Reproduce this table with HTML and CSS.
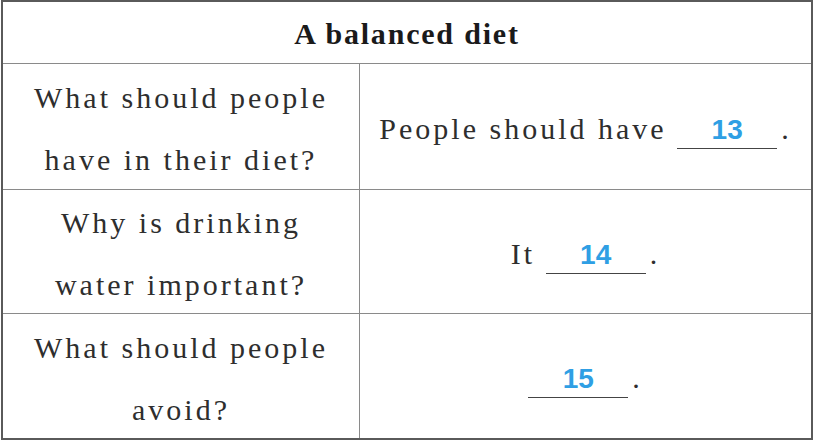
FILE: index.html
```html
<!DOCTYPE html>
<html>
<head>
<meta charset="utf-8">
<link rel="stylesheet" href="styles.css">
</head>
<body>
<div class="sheet">
  <div class="title">A balanced diet</div>
  <div class="q"><p class="text">What should people<br>have in their diet?</p></div>
  <div class="a"><p class="text">People should have <span class="blank">13</span>.</p></div>
  <div class="q"><p class="text">Why is drinking<br>water important?</p></div>
  <div class="a"><p class="text">It <span class="blank">14</span>.</p></div>
  <div class="q last"><p class="text">What should people<br>avoid?</p></div>
  <div class="a last"><p class="text"><span class="blank">15</span>.</p></div>
</div>
</body>
</html>
```
FILE: styles.css
```css
html, body {
  margin: 0;
  padding: 0;
  background: #ffffff;
}
body {
  padding-left: 1px;
}
.sheet {
  box-sizing: border-box;
  width: 812px;
  height: 440px;
  border: 2px solid #5a5a5a;
  display: grid;
  grid-template-columns: 357px 1fr;
  grid-template-rows: 62px 126px 124px 124px;
  font-family: "Liberation Serif", "Times New Roman", serif;
  color: #2e2e2e;
}
.title {
  grid-column: 1 / 3;
  border-bottom: 1px solid #8a8a8a;
  display: flex;
  align-items: center;
  justify-content: center;
  font-weight: bold;
  font-size: 30px;
  letter-spacing: 1.8px;
  color: #1a1a1a;
  padding-top: 3px;
  box-sizing: border-box;
}
.text {
  margin: 0;
}
.q {
  border-right: 1px solid #8a8a8a;
  border-bottom: 1px solid #8a8a8a;
  display: flex;
  align-items: center;
  justify-content: center;
  text-align: center;
  font-size: 30px;
  line-height: 62px;
  letter-spacing: 3px;
  padding-top: 5px;
  box-sizing: border-box;
}
.a {
  border-bottom: 1px solid #8a8a8a;
  display: flex;
  align-items: center;
  justify-content: center;
  font-size: 30px;
  line-height: 34px;
  letter-spacing: 3px;
  padding-top: 7px;
  box-sizing: border-box;
  white-space: nowrap;
}
.last {
  border-bottom: none;
}
.blank {
  display: inline-block;
  width: 100px;
  border-bottom: 1px solid #444;
  text-align: center;
  font-family: "Liberation Sans", Arial, sans-serif;
  font-weight: bold;
  font-size: 28px;
  line-height: 28px;
  letter-spacing: 0;
  color: #2f9fe4;
  padding-bottom: 4px;
  margin-right: 4px;
}
```
